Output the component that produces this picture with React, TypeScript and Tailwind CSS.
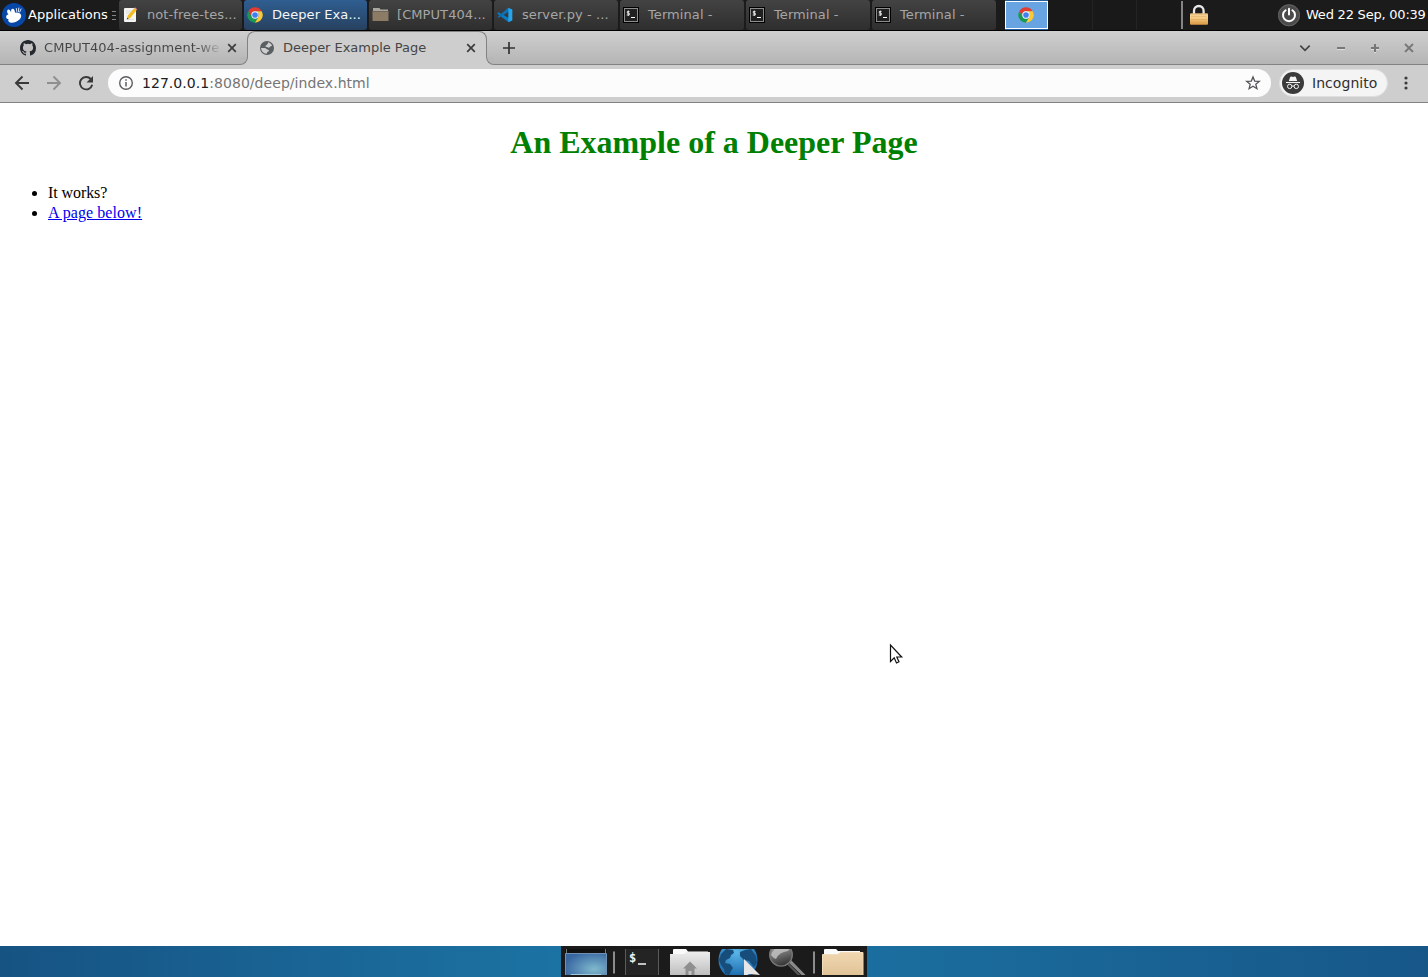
import type { ReactNode } from "react";

const ChromeIcon = () => (
  <svg width="16" height="16" viewBox="0 0 48 48" className="block shrink-0">
    <path d="M4 12.500A23 23 0 0 1 44 12.500H24a11.500 11.500 0 0 0-10 17.250z" fill="#e33b2e" />
    <path d="M4 12.500A23 23 0 0 0 24 47L34 29.750a11.500 11.500 0 0 1-20 0z" fill="#1a9a50" />
    <path d="M44 12.500A23 23 0 0 1 24 47L34 29.750a11.500 11.500 0 0 0-10-17.250z" fill="#fcc934" />
    <circle cx="24" cy="24" r="11" fill="#fff" />
    <circle cx="24" cy="24" r="8.500" fill="#3f80ee" />
  </svg>
);

const NoteIcon = () => (
  <svg width="16" height="16" viewBox="0 0 16 16" className="block shrink-0">
    <rect x="1" y="1" width="12" height="14" rx="1" fill="#f4f4f2" />
    <path d="M3 4h6M3 6h5M3 12.500h8" stroke="#ddd" />
    <path d="M4.500 9 11 1.200l2.500 2L7.300 11 4 12.300z" fill="#f2bd22" />
    <path d="m11 1.200 2.500 2 .7-1-2.300-1.900z" fill="#d88a8a" />
    <path d="m4 12.300.4-1.500 1.200 1z" fill="#222" />
  </svg>
);

const FolderIcon = () => (
  <svg width="17" height="16" viewBox="0 0 17 16" className="-ml-px block shrink-0">
    <path d="M1 1h6.500l1 1.500H16V14H1z" fill="#aaa69d" />
    <path d="M.5 4.500H16.500v9.500H.5z" fill="#8c7b65" />
    <path d="M.5 4.500h16" stroke="#6e665c" />
  </svg>
);

const CodeIcon = () => (
  <svg width="16" height="16" viewBox="0 0 24 24" className="-ml-px block shrink-0">
    <path d="M17 1 6.500 11 2.800 8 .8 9v1.500L17.500 23l.5-6-8-5 8-5.500z" fill="#087bc4" />
    <path d="m.8 14.500 2 1.800L17 6.500V1z" fill="#0d6fb5" />
    <path d="m17 1 6 2.700v16.600L17 23z" fill="#24a5ee" />
  </svg>
);

const TermIcon = () => (
  <span className="-ml-px flex size-4 shrink-0 border border-black bg-black">
    <span className="block size-[14px] border border-[#8d8d8d] bg-[#202020]">
      <svg width="12" height="12" viewBox="0 0 12 12" className="block">
        <path d="M4.500 2.500H2.300v1.700h2v1.800H1.700M3.300 1.500v5.500" fill="none" stroke="#eee" strokeWidth=".9" />
        <path d="M6 8.500h4" stroke="#fff" />
      </svg>
    </span>
  </span>
);

type Task = { icon: ReactNode; label: string; active?: boolean; wide?: boolean };
const tasks: Task[] = [
  { icon: <NoteIcon />, label: "not-free-tes..." },
  { icon: <ChromeIcon />, label: "Deeper Exa...", active: true },
  { icon: <FolderIcon />, label: "[CMPUT404..." },
  { icon: <CodeIcon />, label: "server.py - ...", wide: true },
  { icon: <TermIcon />, label: "Terminal -", wide: true },
  { icon: <TermIcon />, label: "Terminal -", wide: true },
  { icon: <TermIcon />, label: "Terminal -", wide: true },
];

function TopPanel() {
  return (
    <header className="flex h-[31px] shrink-0 border-b border-black bg-[#1b1b1b] text-[13px] text-white">
      <div className="flex w-[119px] shrink-0 items-center pl-[2px]">
        <svg width="24" height="24" viewBox="0 0 24 24" className="block shrink-0">
          <circle cx="12" cy="12" r="12" fill="#0747a8" />
          <path d="M4.200 14.500C4 12.500 5 11.700 6.500 11.500 5 10 4.500 7.500 5.800 6.700 7.200 6 8.600 7.700 9.200 9.600 8.800 7.500 9.300 5.800 10.700 5.800c1.500 0 2.200 1.700 2.300 3.900 3.200-.5 5.900.7 6.200 2.800.3 2.700-2.700 5.600-6.300 6.800-2.600.8-5.300.5-6.200-.8-.6-.9-.4-1.700-.1-2.300-1.200-.2-2.200-.7-2.400-1.700z" fill="#fff" />
          <path d="m14.300 5.500.5 3M16.800 5l-.4 3.700M19 6l-1.300 3" stroke="#dce7f7" strokeWidth="1" strokeLinecap="round" />
        </svg>
        <span className="ml-[2px] w-[80px] whitespace-nowrap tracking-[0.04px]">Applications</span>
        <span className="ml-1 flex flex-col gap-[3px]">
          <i className="h-px w-1 bg-[#858585]" />
          <i className="h-px w-1 bg-[#858585]" />
          <i className="h-px w-1 bg-[#858585]" />
        </span>
      </div>
      <nav className="flex gap-[2px]">
        {tasks.map((t, i) => (
          <div
            key={i}
            className={`flex h-[30px] items-center rounded-[3px] pl-1 ${t.wide ? "w-[124px]" : "w-[123px]"} ${
              t.active
                ? "bg-linear-to-b from-[#2f5e91] to-[#27415f] text-[#f4f6f8]"
                : "bg-linear-to-b from-[#434343] to-[#2e2e2e] text-[#a6a6a6]"
            }`}
          >
            <span className="w-6 shrink-0">
              <span className={t.active ? "-ml-px block" : "block"}>{t.icon}</span>
            </span>
            <span className="whitespace-nowrap tracking-[0.08px]">{t.label}</span>
          </div>
        ))}
      </nav>
      <div className="ml-[9px] flex">
        <div className="flex h-[30px] w-[43px] flex-col border-y border-[#215d9c]">
          <div className="flex h-[28px] items-center justify-center border border-white bg-[#68a4e2] pr-px">
            <ChromeIcon />
          </div>
        </div>
        <div className="w-[45px] border-r border-[#242424] bg-[#191919]" />
        <div className="w-[44px] border-r border-[#242424] bg-[#191919]" />
        <div className="w-[44px] bg-[#191919]" />
        <div className="my-px w-[2px] bg-[#858585]" />
      </div>
      <svg width="20" height="22" viewBox="0 0 20 22" className="ml-[6px] mt-[4px] block">
        <defs>
          <linearGradient id="lock" x2="0" y2="1">
            <stop stopColor="#e0b377" />
            <stop offset=".25" stopColor="#fbd798" />
            <stop offset="1" stopColor="#dc9a42" />
          </linearGradient>
        </defs>
        <path d="M5 10V6.800a4.800 4.800 0 0 1 9.600 0V10" fill="none" stroke="#e9e9e9" strokeWidth="2.300" />
        <rect x="1" y="9.300" width="18" height="11.400" rx="1" fill="url(#lock)" />
        <path d="M2 12.500h16M2 15.500h16M2 18.500h16" stroke="#d9a458" strokeWidth=".5" />
      </svg>
      <div className="ml-auto flex items-center whitespace-nowrap pr-[2px]">
        <svg width="22" height="24" viewBox="0 0 22 24" className="mr-[6px] block">
          <circle cx="11" cy="12.300" r="11" fill="#4b4b4b" />
          <circle cx="11" cy="12.300" r="10.500" fill="none" stroke="#626262" />
          <path d="M7.600 7.200a6 6 0 1 0 6.800 0" fill="none" stroke="#fff" strokeWidth="2" strokeLinecap="round" />
          <path d="M11 5.700v5.800" stroke="#fff" strokeWidth="2" strokeLinecap="round" />
        </svg>
        <span className="w-[120px] tracking-[-0.22px]">Wed 22 Sep, 00:39</span>
      </div>
    </header>
  );
}

const CloseIcon = () => (
  <svg width="10" height="10" viewBox="0 0 10 10" className="block shrink-0">
    <path d="m1.200 1.200 7.600 7.600m0-7.600L1.200 8.800" stroke="#3c3c3c" strokeWidth="1.700" />
  </svg>
);

function TabStrip() {
  return (
    <div className="flex h-[34px] shrink-0 border-b border-[#828282] bg-linear-to-b from-[#cfcfcf] to-[#b5b5b5] text-[13px] text-[#454545]">
      <div className="flex w-[247px] items-center pl-5">
        <svg width="16" height="16" viewBox="0 0 16 16" className="block shrink-0">
          <path fill="#24292f" d="M8 0C3.580 0 0 3.580 0 8c0 3.540 2.290 6.530 5.470 7.590.4.070.55-.17.55-.38 0-.19-.01-.82-.01-1.490-2.010.37-2.530-.49-2.690-.94-.09-.23-.48-.94-.82-1.130-.28-.15-.68-.52-.01-.53.63-.01 1.080.58 1.230.82.72 1.210 1.870.87 2.330.66.070-.52.28-.87.51-1.070-1.780-.2-3.640-.89-3.640-3.950 0-.87.31-1.590.82-2.150-.08-.2-.36-1.020.08-2.120 0 0 .67-.21 2.200.82a7.600 7.600 0 0 1 4 0c1.530-1.040 2.200-.82 2.200-.82.44 1.100.16 1.920.08 2.120.51.56.82 1.270.82 2.150 0 3.070-1.870 3.750-3.650 3.950.29.25.54.73.54 1.480 0 1.070-.01 1.930-.01 2.200 0 .21.15.46.55.38A8 8 0 0 0 16 8c0-4.420-3.580-8-8-8z" />
        </svg>
        <span className="ml-2 w-[175px] bg-linear-to-r from-[#454545] from-87% to-[#454545]/15 bg-clip-text whitespace-nowrap tracking-[0.06px] text-transparent">
          CMPUT404-assignment-we
        </span>
        <span className="ml-2"><CloseIcon /></span>
      </div>
      <div className="relative h-[34px] w-[240px] rounded-t-[8px] border border-b-0 border-[#828282] bg-[#cecece]">
        <div className="absolute bottom-0 -left-[8px] size-2 bg-[#cecece]">
          <div className="size-2 rounded-br-[8px] border-r border-b border-[#828282] bg-[#b7b7b7]" />
        </div>
        <div className="absolute -right-[8px] bottom-0 size-2 bg-[#cecece]">
          <div className="size-2 rounded-bl-[8px] border-b border-l border-[#828282] bg-[#b7b7b7]" />
        </div>
        <div className="flex h-[32px] items-center pl-[11px]">
          <svg width="16" height="16" viewBox="0 0 16 16" className="block shrink-0">
            <circle cx="8" cy="8" r="7" fill="#5a5f63" />
            <path d="M9.200 2.200c1.700.4 3.200 1.700 3.900 3.400-.5 1.200-1.900.6-2.300 1.500-.3 1-1.600.8-2.300.2-.7-.5-2 .1-2-1.200 0-.9 1.400-.5 1.600-1.500.1-.8 1-.8 1.100-2.400zM2.100 8.100h3.600c1.500 0 1.700 1.600 3.200 1.600 1 0 1.300.8.9 1.600-.3.600-1.500.4-1.700 1.200-.1.500-.4.900-.8 1.300-3-.4-5.200-2.800-5.200-5.700z" fill="#cecece" />
          </svg>
          <span className="ml-2 w-[183px] whitespace-nowrap tracking-[-0.03px]">Deeper Example Page</span>
          <CloseIcon />
        </div>
      </div>
      <svg width="12" height="12" viewBox="0 0 12 12" className="ml-4 mt-[11px] block">
        <path d="M6 0v12M0 6h12" stroke="#333" strokeWidth="1.700" />
      </svg>
      <div className="ml-auto flex items-center gap-[22px] pr-[13px]">
        <svg width="12" height="12" viewBox="0 0 12 12" className="mr-[2px] block">
          <path d="m1.300 3.700 4.700 4.600 4.700-4.600" fill="none" stroke="#444" strokeWidth="1.700" />
        </svg>
        <svg width="12" height="12" viewBox="0 0 12 12" className="block">
          <path d="M2 7.500h8" stroke="#dedede" />
          <path d="M2 6h8" stroke="#777" strokeWidth="2" />
        </svg>
        <svg width="12" height="12" viewBox="0 0 12 12" className="block">
          <path d="M2 7.500h8M5 10.500h2" stroke="#dedede" />
          <path d="M2 6h8M6 2v8" stroke="#777" strokeWidth="2" />
        </svg>
        <svg width="12" height="12" viewBox="0 0 12 12" className="block">
          <path d="m2 3 8 8m0-8-8 8" stroke="#dedede" />
          <path d="m2 2 8 8m0-8-8 8" stroke="#777" strokeWidth="1.900" />
        </svg>
      </div>
    </div>
  );
}

function Toolbar() {
  return (
    <div className="flex h-[38px] shrink-0 items-center border-b border-[#828282] bg-[#cecece] pb-px pl-[14px]">
      <svg width="80" height="16" viewBox="0 0 80 16" className="mr-[14px] block">
        <path d="M15 8H2.500M8.500 1.500 2 8l6.500 6.500" fill="none" stroke="#393939" strokeWidth="1.900" />
        <path d="M33 8h12.500M39.500 1.500 46 8l-6.500 6.500" fill="none" stroke="#8f8f8f" strokeWidth="1.900" />
        <path d="M78.200 9.700A6.200 6.200 0 1 1 76.800 4" fill="none" stroke="#393939" strokeWidth="1.900" />
        <path d="M79 1v6.500h-6.500z" fill="#393939" />
      </svg>
      <div className="flex h-7 w-[1163px] items-center rounded-full bg-[#fcfcfc] pr-[10px] pl-[10px]">
        <svg width="16" height="16" viewBox="0 0 16 16" className="block">
          <circle cx="8" cy="8" r="6.300" fill="none" stroke="#5a5d61" strokeWidth="1.400" />
          <path d="M8 7v4.500M8 4.200v1.600" stroke="#5a5d61" strokeWidth="1.500" />
        </svg>
        <span className="ml-2 text-[14px] tracking-[0.05px] whitespace-nowrap text-[#757575]">
          <span className="text-[#202020]">127.0.0.1</span>:8080/deep/index.html
        </span>
        <svg width="16" height="16" viewBox="0 0 16 16" className="ml-auto block">
          <path d="m8 1.900 1.700 4.200 4.600.3-3.500 2.900 1.100 4.400L8 11.300l-3.900 2.400 1.100-4.400-3.500-2.900 4.600-.3z" fill="none" stroke="#505357" strokeWidth="1.300" />
        </svg>
      </div>
      <div className="ml-2 flex h-7 w-[109px] items-center rounded-full border border-[#dfdfdf] bg-[#f4f4f4] pl-[2px]">
        <svg width="22" height="22" viewBox="0 0 22 22" className="block">
          <circle cx="11" cy="11" r="11" fill="#3b3b3b" />
          <path d="m6.800 9 1.400-3.900c.2-.5.7-.7 1.200-.5l1.600.5 1.600-.5c.5-.2 1 0 1.200.5L15.200 9z" fill="#f4f4f4" />
          <path d="M4 10.500h14" stroke="#f4f4f4" strokeWidth="1.100" />
          <circle cx="7.700" cy="14.400" r="2.200" fill="none" stroke="#f4f4f4" />
          <circle cx="14.300" cy="14.400" r="2.200" fill="none" stroke="#f4f4f4" />
          <path d="M9.800 14.300q1.200-.8 2.400 0" fill="none" stroke="#f4f4f4" />
        </svg>
        <span className="ml-2 text-[14px] tracking-[0.05px] text-[#303030]">Incognito</span>
      </div>
      <svg width="4" height="16" viewBox="0 0 4 16" className="ml-[16px] block">
        <circle cx="2" cy="3" r="1.600" fill="#3c3c3c" />
        <circle cx="2" cy="8" r="1.600" fill="#3c3c3c" />
        <circle cx="2" cy="13" r="1.600" fill="#3c3c3c" />
      </svg>
    </div>
  );
}

function Dock() {
  return (
    <footer className="flex h-[31px] shrink-0 justify-center bg-linear-to-r from-[#165383] via-[#1c78a8] via-45% to-[#165788]">
      <div className="-ml-px h-[31px] w-[306px] bg-[#1b1b1b]">
        <svg width="306" height="31" viewBox="0 0 306 31" className="block">
          <defs>
            <radialGradient id="desk" cx=".7" cy=".65" r=".75">
              <stop stopColor="#7fb9cc" />
              <stop offset="1" stopColor="#3866a2" />
            </radialGradient>
            <radialGradient id="earth" cx=".45" cy=".3" r=".65">
              <stop stopColor="#5ab6e8" />
              <stop offset="1" stopColor="#1a68ab" />
            </radialGradient>
            <linearGradient id="home" x2="0" y2="1">
              <stop stopColor="#ededed" />
              <stop offset="1" stopColor="#b8b8b8" />
            </linearGradient>
            <linearGradient id="files" x2="0" y2="1">
              <stop stopColor="#f0d7b1" />
              <stop offset="1" stopColor="#e0c195" />
            </linearGradient>
            <linearGradient id="glass" x2=".3" y2="1">
              <stop stopColor="#a5a5a5" />
              <stop offset=".5" stopColor="#777" />
              <stop offset="1" stopColor="#3a3a3a" />
            </linearGradient>
            <clipPath id="row">
              <path d="M0 3h306v26H0z" />
            </clipPath>
          </defs>
          <g clipPath="url(#row)">
            <path d="M4 3h42v26H4z" fill="#111" />
            <path d="M5.500 3v5M44.500 3v5" stroke="#777" />
            <path d="M4.500 7.500h41v24h-41z" fill="url(#desk)" stroke="#6e91b4" />
            <path d="M10 30v-1.500h30V30" fill="none" stroke="#9fc9dd" />
            <path d="M65 3h33v26H65z" fill="#242424" />
            <path d="M64.500 3v26M97.500 3v26" stroke="#5b5b5b" />
            <text x="68" y="16" fontFamily="DejaVu Sans Mono" fontSize="12" fontWeight="bold" fill="#f4f4f4">$</text>
            <path d="M77 18h8" stroke="#ddd" strokeWidth="1.700" />
            <path d="M112 4q0-1 1-1h12l2 2.500h20V10h-35z" fill="#fafafa" />
            <path d="M109 8h14l3-2h23v26h-40z" fill="url(#home)" />
            <path d="m129 15.500-7 7h2.500V30h3v-5h3v5h3v-7.500h2.500z" fill="#8f8f8f" />
            <circle cx="177" cy="14" r="19.500" fill="url(#earth)" />
            <path d="m160 8 5-5 7 1 1 3-3 2-1 3-4 2-1 3 5 1 3 4-2 3-2 4-4-1-1-5-3-4-2-5z" fill="#174d7b" />
            <path d="m179 6 5-2 6-1 5 7 1 7-3 4-5-6-5-1-4-4z" fill="#174d7b" />
            <path d="m183 13 0 18 5-3 11 1z" fill="#e6e6e6" />
            <path d="m227 16 14 13.500h4L230 14z" fill="#8a8a8a" />
            <path d="m226.500 17.500 12 12" stroke="#555" strokeWidth="2" />
            <circle cx="220" cy="8.800" r="11.300" fill="url(#glass)" stroke="#777" strokeWidth="1.400" />
            <path d="M210 9q2-7 10-9h8q1 3-1 5-9 1-12 8-3-1-5-4z" fill="#c6c6c6" opacity=".8" />
            <path d="M263 4q0-1 1-1h11l2 2h22v5h-36z" fill="#fafafa" />
            <path d="M261.500 8.500h15l3-2h22.500v25h-40.500z" fill="url(#files)" stroke="#f2dcb9" />
          </g>
          <path d="M53 5.500v22M253 5.500v22" stroke="#8c8c8c" strokeWidth="2" />
        </svg>
      </div>
    </footer>
  );
}

export default function App() {
  return (
    <div className="relative flex h-[977px] w-[1428px] flex-col overflow-hidden bg-white font-['DejaVu_Sans',sans-serif]">
      <TopPanel />
      <TabStrip />
      <Toolbar />
      <main className="grow bg-white px-2 font-['Liberation_Serif',serif] text-[16px] leading-[20px] text-black">
        <h1 className="mt-[21px] text-center text-[32px] leading-[37px] font-bold text-[#008000]">An Example of a Deeper Page</h1>
        <ul className="mt-[22px] list-disc pl-10">
          <li className="tracking-[-0.08px]">It works?</li>
          <li className="tracking-[0.06px]"><a href="#below" className="text-[#0000ee] underline">A page below!</a></li>
        </ul>
      </main>
      <Dock />
      <svg width="15" height="22" viewBox="0 0 15 22" className="absolute top-[643px] left-[889px] block">
        <path d="M1.500 2v16.500l3.700-3.700 2.300 5.200 2.500-1.200-2.200-4.800h4.900z" fill="#fff" stroke="#111" strokeWidth="1.200" />
      </svg>
    </div>
  );
}
